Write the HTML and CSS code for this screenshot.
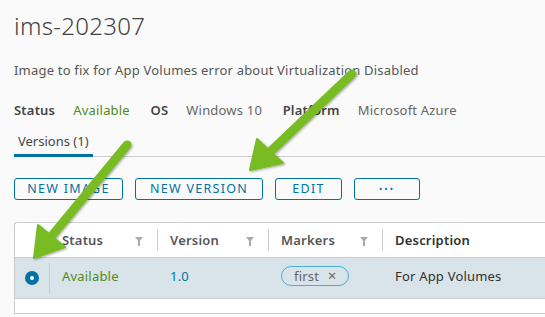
FILE: index.html
```html
<!DOCTYPE html>
<html lang="en">
<head>
    <meta charset="UTF-8">
    <title>ims-202307</title>
    <link rel="stylesheet" href="styles.css">
</head>
<body>
    <div class="page">
        <h1>ims-202307</h1>
        <p class="desc">Image to fix for App Volumes error about Virtualization Disabled</p>
        <div class="props">
            <span class="key">Status</span><span class="val ok">Available</span>
            <span class="key">OS</span><span class="val">Windows 10</span>
            <span class="key">Platform</span><span class="val">Microsoft Azure</span>
        </div>
        <div class="tabs">
            <span class="tab active">Versions (1)</span>
        </div>
        <div class="actions">
            <button class="btn w-image">NEW IMAGE</button>
            <button class="btn w-version">NEW VERSION</button>
            <button class="btn w-edit">EDIT</button>
            <button class="btn w-more">&bull;&bull;&bull;</button>
        </div>
        <div class="grid">
            <div class="row head">
                <div class="cell sel"></div>
                <div class="cell c-status">Status <span class="filter"></span></div>
                <div class="cell c-version">Version <span class="filter"></span></div>
                <div class="cell c-markers">Markers <span class="filter"></span></div>
                <div class="cell c-desc">Description</div>
            </div>
            <div class="row body">
                <div class="cell sel"><span class="radio"></span></div>
                <div class="cell c-status ok">Available</div>
                <div class="cell c-version link">1.0</div>
                <div class="cell c-markers"><span class="label">first <span class="x">&times;</span></span></div>
                <div class="cell c-desc">For App Volumes</div>
            </div>
        </div>
    </div>

    <svg class="arrows" width="545" height="317" viewBox="0 0 545 317">
        <defs>
            <filter id="shade" x="-20%" y="-20%" width="140%" height="140%">
                <feDropShadow dx="1" dy="1" stdDeviation="1.2" flood-color="#000" flood-opacity="0.35"/>
            </filter>
        </defs>
        <g fill="#78bb22" stroke="#78bb22" stroke-linejoin="round" filter="url(#shade)">
            <line x1="352" y1="74" x2="270" y2="152" stroke-width="9" stroke-linecap="round"/>
            <polygon points="250,170 257,139 283,163" stroke-width="2"/>
            <line x1="127" y1="145" x2="50" y2="238" stroke-width="9" stroke-linecap="round"/>
            <polygon points="34,258 38,225 65,247" stroke-width="2"/>
        </g>
    </svg>
</body>
</html>
```

FILE: styles.css
```css
body {
    margin: 0;
    background-color: #fafafa;
    font-family: 'Noto Sans', 'Open Sans', sans-serif;
    color: #565656;
    width: 545px;
    height: 317px;
    overflow: hidden;
    position: relative;
}
.page {
    padding: 0 0 0 14px;
}
h1 {
    margin: 0;
    padding-top: 10px;
    font-size: 24px;
    font-weight: 300;
    color: #444;
    line-height: 32px;
    letter-spacing: 0.3px;
}
.desc {
    margin: 20px 0 0;
    font-size: 13px;
    line-height: 16px;
    letter-spacing: 0.2px;
    color: #565656;
}
.props {
    margin-top: 24px;
    font-size: 13px;
    line-height: 16px;
    letter-spacing: 0.2px;
}
.key {
    font-weight: 600;
    color: #454545;
    margin-right: 18px;
}
.val {
    margin-right: 17px;
    color: #666;
}
.ok {
    color: #4f8a1c;
}
.tabs {
    margin-top: 14px;
    border-bottom: 1px solid #ccc;
    display: flex;
}
.tab {
    font-size: 13px;
    color: #454545;
    line-height: 18px;
    padding: 0 4px 4px;
    border-bottom: 3px solid #0072a3;
    margin-bottom: -1px;
}
.actions {
    display: flex;
    gap: 12px;
    margin-top: 21px;
}
.btn {
    height: 22px;
    border: 1px solid #0072a3;
    border-radius: 3px;
    background: transparent;
    color: #0072a3;
    font-family: inherit;
    font-size: 12.5px;
    letter-spacing: 1.3px;
    padding: 0;
    line-height: 20px;
}
.w-image { width: 109px; }
.w-version { width: 128px; }
.w-edit { width: 67px; }
.w-more { width: 66px; font-size: 9px; letter-spacing: 2px; }
.grid {
    margin-top: 22px;
    border: 1px solid #ccc;
    border-right: none;
    border-radius: 3px 0 0 0;
    background: #fff;
    height: 90px;
}
.row {
    display: flex;
    align-items: center;
}
.row.head {
    height: 34px;
    font-size: 13px;
    font-weight: 600;
    letter-spacing: 0.2px;
    color: #565656;
    border-bottom: 1px solid #ccc;
}
.row.body {
    height: 40px;
    background: #d9e4ea;
    border-bottom: 1px solid #ccc;
    font-size: 13px;
    letter-spacing: 0.2px;
}
.cell {
    position: relative;
    box-sizing: border-box;
    padding-left: 12px;
    display: flex;
    align-items: center;
    height: 100%;
}
.row.body .cell {
    padding-bottom: 4px;
}
.sel {
    width: 35px;
    padding: 0;
    justify-content: center;
}
.row.body .sel {
    border-right: 1px solid #ccc;
    height: 30px;
    padding-bottom: 0;
}
.c-status { width: 108px; }
.c-version { width: 111px; }
.c-markers { width: 114px; }
.c-desc { flex: 1; }
.row.head .c-status,
.row.head .c-version,
.row.head .c-markers {
    border-right: 1px solid #ccc;
    height: 22px;
}
.filter {
    position: absolute;
    right: 14px;
    top: 8px;
    width: 0;
    height: 0;
    border-left: 4px solid transparent;
    border-right: 4px solid transparent;
    border-top: 5px solid #aaa;
}
.filter::after {
    content: '';
    position: absolute;
    left: -1px;
    top: -1px;
    width: 2px;
    height: 5px;
    background: #aaa;
}
.radio {
    width: 14px;
    height: 14px;
    border-radius: 50%;
    background: #0072a3;
    position: relative;
}
.radio::after {
    content: '';
    position: absolute;
    left: 5px;
    top: 5px;
    width: 4px;
    height: 4px;
    border-radius: 50%;
    background: #fff;
}
.link {
    color: #0072a3;
}
.label {
    border: 1px solid #49afd9;
    border-radius: 10px;
    padding: 0 12px;
    font-size: 13px;
    line-height: 17px;
    color: #666;
}
.x {
    margin-left: 5px;
    font-size: 15px;
}
.c-desc {
    color: #313131;
}
.arrows {
    position: absolute;
    left: 0;
    top: 0;
}
```
